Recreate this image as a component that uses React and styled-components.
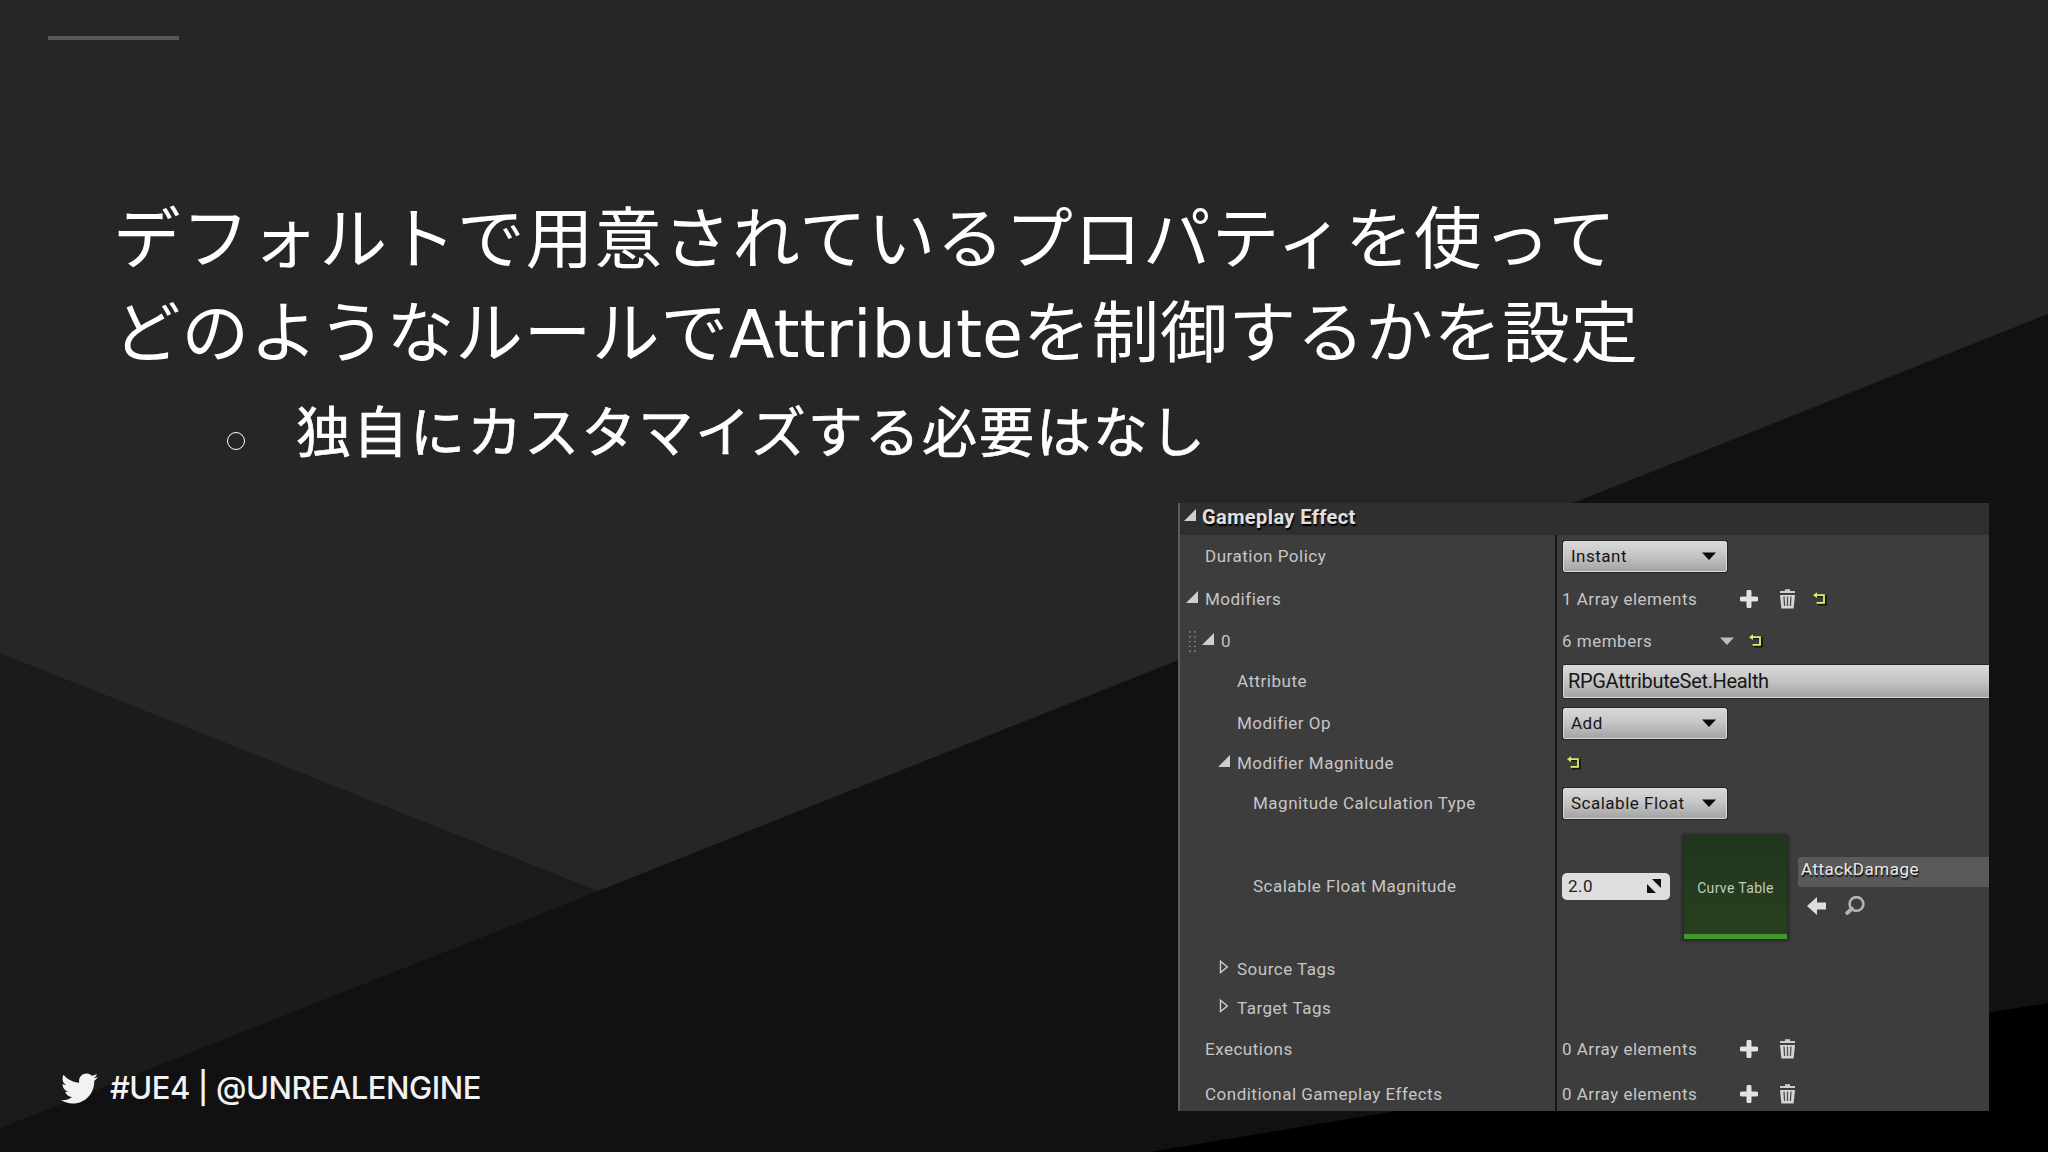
import styled, { createGlobalStyle } from "styled-components";
import { FaTwitter } from "react-icons/fa";

const GlobalStyle = createGlobalStyle`
  body {
    margin: 0;
    background: #262626;
  }
  * {
    box-sizing: border-box;
  }
`;

const Slide = styled.main`
  position: relative;
  width: 2048px;
  height: 1152px;
  overflow: hidden;
  display: flex;
  flex-direction: column;
  background: #262626;
  color: #fff;
`;

const Backdrop = styled.svg`
  position: absolute;
  inset: 0;
`;

const Accent = styled.div`
  position: relative;
  width: 131px;
  height: 4px;
  margin: 36px 0 0 48px;
  background: #585858;
`;

const TextBlock = styled.section`
  position: relative;
  margin: 147px 0 0 113px;
  white-space: nowrap;
  font-family: "Noto Sans CJK JP", sans-serif;
`;

const Heading = styled.h1`
  margin: 0;
  font-size: 67.6px;
  font-weight: 400;
  line-height: 94px;
`;

const HeadingLine = styled.span`
  display: block;
  letter-spacing: ${(props) => props.$tracking}px;
`;

const Latin = styled.span`
  font-family: "DejaVu Sans", sans-serif;
  font-size: 66.6px;
  line-height: 1;
  letter-spacing: 0;
`;

const SubList = styled.ul`
  list-style: none;
  margin: 11px 0 0;
  padding: 0 0 0 114px;
`;

const SubItem = styled.li`
  display: flex;
  align-items: center;
  gap: 51px;
  font-size: 55px;
  font-weight: 400;
  line-height: 84px;
  letter-spacing: 2.05px;
  -webkit-text-stroke: 0.7px #fff;
`;

const Bullet = styled.span`
  width: 18px;
  height: 18px;
  margin-top: 25px;
  border: 1.5px solid #fff;
  border-radius: 50%;
`;

const Lower = styled.div`
  position: relative;
  flex: 1;
  display: flex;
  justify-content: space-between;
  align-items: flex-end;
  padding: 0 59px 41px 61px;
`;

const Social = styled.footer`
  display: flex;
  align-items: center;
  gap: 12px;
  height: 46px;
  color: #f2f2f2;
  font: 500 31px/46px Inter, sans-serif;
  letter-spacing: -0.45px;
`;

const Panel = styled.section`
  width: 811px;
  height: 608px;
  overflow: hidden;
  border-left: 2px solid #5c5c5c;
  background: #3d3d3d;
  color: #c6c6c6;
  font: 400 17px/22px Roboto, sans-serif;
  letter-spacing: 0.5px;
  white-space: nowrap;
`;

const PanelHeader = styled.header`
  display: flex;
  align-items: center;
  gap: 6px;
  height: 32px;
  padding: 0 0 5px 4px;
  background: #2f2f2f;
  color: #e0e0e0;
  font-size: 20px;
  font-weight: 700;
  letter-spacing: 0.4px;
  text-shadow: 1px 2px 1px #000;
`;

const Row = styled.div`
  display: grid;
  grid-template-columns: 377px 1fr;
  height: ${(props) => props.$height}px;
`;

const NameCell = styled.div`
  display: flex;
  align-items: center;
  padding: 0 0 1px ${(props) => props.$indent}px;
  border-right: 2px solid #161616;
`;

const ValueCell = styled.div`
  display: flex;
  align-items: center;
  padding-left: 5px;
`;

const Arrow = styled.svg`
  flex: none;
  margin: 0 ${(props) => props.$gap || 0}px 4px 0;
`;

const Grip = styled.svg`
  flex: none;
  margin: 2px 5px 0 1px;
`;

const Button = styled.div`
  display: flex;
  align-items: center;
  justify-content: space-between;
  flex: none;
  width: 164px;
  height: 31px;
  margin-left: 1px;
  padding: 0 10px 1px 7px;
  border: 1px solid #d9d9d9;
  border-radius: 2px;
  box-shadow: 0 0 0 1px #262626;
  background: linear-gradient(#d8d8d8, #c6c6c6 45%, #a4a4a4);
  color: #161616;
`;

const WideButton = styled(Button)`
  width: auto;
  flex: 1;
  height: 33px;
  padding-left: 4px;
  border-right: 0;
  border-radius: 2px 0 0 2px;
  font-size: 20px;
  letter-spacing: -0.33px;
`;

const Count = styled.span`
  width: ${(props) => props.$width}px;
  padding-bottom: 1px;
`;

const Tools = styled.span`
  display: flex;
  align-items: center;
  gap: ${(props) => props.$gap}px;
  padding-bottom: 1px;
`;

const NumberField = styled.div`
  display: flex;
  align-items: center;
  justify-content: space-between;
  width: 108px;
  height: 27px;
  padding: 0 9px 0 6px;
  border-radius: 5px;
  background: #dedede;
  color: #222;
`;

const Thumb = styled.div`
  display: flex;
  align-items: center;
  justify-content: center;
  width: 103px;
  height: 103px;
  margin: 3px 11px 0 14px;
  padding-top: 5px;
  border-bottom: 5px solid #43972b;
  box-shadow: 0 0 3px 2px #262626;
  background: linear-gradient(#20361c, #28401f);
  color: #c3cbc0;
  font-size: 14px;
  letter-spacing: 0.35px;
`;

const Asset = styled.div`
  flex: 1;
  display: flex;
  flex-direction: column;
  gap: 9px;
`;

const AssetName = styled.div`
  height: 30px;
  padding: 1px 0 0 3px;
  border-radius: 3px 0 0 3px;
  background: #5a5a5a;
  color: #e8e8e8;
  text-shadow: 1px 2px 1px #111;
`;

const AssetTools = styled.div`
  display: flex;
  align-items: center;
  gap: 18px;
  padding-left: 9px;
`;

const Expanded = ({ gap }) => (
  <Arrow $gap={gap} width="12" height="12" viewBox="0 0 12 12">
    <path d="M12 0v12H0z" fill="#cfcfcf" />
  </Arrow>
);

const Collapsed = ({ gap }) => (
  <Arrow $gap={gap} width="10" height="14" viewBox="0 0 10 14">
    <path d="M1.5 1.3v11.2L8.3 7z" fill="none" stroke="#cfcfcf" strokeWidth="1.4" />
  </Arrow>
);

const Caret = ({ color = "#0a0a0a" }) => (
  <svg width="14" height="8" viewBox="0 0 14 8">
    <path d="M0 .5h14L7 8z" fill={color} />
  </svg>
);

const PlusIcon = () => (
  <svg width="18" height="18" viewBox="0 0 18 18">
    <path d="M9 2v14M2 9h14" stroke="#e2e2e2" strokeWidth="5" strokeLinecap="round" />
  </svg>
);

const TrashIcon = () => (
  <svg width="17" height="20" viewBox="0 0 17 20">
    <path d="M1 3h15M6 1.2h5" stroke="#cfcfcf" strokeWidth="2" />
    <path d="M1 6h15l-1.4 13.5H2.4z" fill="#d6d6d6" />
    <path d="M5 7.5l.6 9.5M8.5 7.5V17M12 7.5l-.6 9.5" stroke="#4c4c4c" strokeWidth="1.3" />
  </svg>
);

const ResetIcon = () => (
  <svg width="14" height="14" viewBox="0 0 14 14">
    <path d="M4 4.2h8.8v8.4H5" fill="none" stroke="#151515" strokeWidth="2" />
    <path d="M3 3.2h8v7.6H3.6" fill="none" stroke="#dfee66" strokeWidth="1.8" />
    <path d="M0 3.2L4 .3v5.8z" fill="#dfee66" />
  </svg>
);

const DragIcon = () => (
  <svg width="14" height="14" viewBox="0 0 14 14">
    <path d="M5 0h9v9zM0 5v9h9z" fill="#111" />
  </svg>
);

const UseIcon = () => (
  <svg width="20" height="18" viewBox="0 0 20 18">
    <path d="M0 9L10 0v5.5h9v7h-9V18z" fill="#dedede" />
  </svg>
);

const FindIcon = () => (
  <svg width="20" height="19" viewBox="0 0 20 19">
    <circle cx="11.5" cy="8" r="6.9" fill="none" stroke="#b4b4b4" strokeWidth="2.6" />
    <path d="M7 12.7L2.2 17" stroke="#b4b4b4" strokeWidth="3.8" strokeLinecap="round" />
  </svg>
);

const dots = [0, 1, 2, 3, 4];

const DragHandle = () => (
  <Grip width="8" height="22" viewBox="0 0 8 22">
    {dots.map((n) => (
      <path key={n} d={`M0 ${1 + n * 4.8}h1.6M5 ${1 + n * 4.8}h1.6`} stroke="#8e8e8e" strokeWidth="1.4" />
    ))}
  </Grip>
);

const Dropdown = ({ label }) => (
  <Button>
    {label}
    <Caret />
  </Button>
);

const ResetTool = styled(Tools)`
  margin-left: ${(props) => props.$offset}px;
`;

const ArrayValue = ({ count, reset }) => (
  <>
    <Count $width={178}>{count} Array elements</Count>
    <Tools $gap={21}>
      <PlusIcon />
      <TrashIcon />
    </Tools>
    {reset ? (
      <ResetTool $offset={17}>
        <ResetIcon />
      </ResetTool>
    ) : null}
  </>
);

const rows = [
  { name: "Duration Policy", height: 42, indent: 25, value: <Dropdown label="Instant" /> },
  { name: "Modifiers", height: 44, indent: 6, icon: <Expanded gap={7} />, value: <ArrayValue count={1} reset /> },
  {
    name: "0",
    height: 40,
    indent: 8,
    icon: (
      <>
        <DragHandle />
        <Expanded gap={7} />
      </>
    ),
    value: (
      <>
        <Count $width={158}>6 members</Count>
        <Tools $gap={15}>
          <Caret color="#bdbdbd" />
          <ResetIcon />
        </Tools>
      </>
    ),
  },
  { name: "Attribute", height: 40, indent: 57, value: <WideButton>RPGAttributeSet.Health</WideButton> },
  { name: "Modifier Op", height: 45, indent: 57, value: <Dropdown label="Add" /> },
  {
    name: "Modifier Magnitude",
    height: 34,
    indent: 38,
    icon: <Expanded gap={7} />,
    value: (
      <ResetTool $offset={5}>
        <ResetIcon />
      </ResetTool>
    ),
  },
  { name: "Magnitude Calculation Type", height: 47, indent: 73, value: <Dropdown label="Scalable Float" /> },
  {
    name: "Scalable Float Magnitude",
    height: 118,
    indent: 73,
    value: (
      <>
        <NumberField>
          2.0
          <DragIcon />
        </NumberField>
        <Thumb>Curve Table</Thumb>
        <Asset>
          <AssetName>AttackDamage</AssetName>
          <AssetTools>
            <UseIcon />
            <FindIcon />
          </AssetTools>
        </Asset>
      </>
    ),
  },
  { name: "Source Tags", height: 48, indent: 39, icon: <Collapsed gap={8} /> },
  { name: "Target Tags", height: 31, indent: 39, icon: <Collapsed gap={8} /> },
  { name: "Executions", height: 50, indent: 25, value: <ArrayValue count={0} /> },
  { name: "Conditional Gameplay Effects", height: 40, indent: 25, value: <ArrayValue count={0} /> },
];

const App = () => {
  return (
    <>
      <GlobalStyle />
      <Slide>
        <Backdrop width="2048" height="1152" viewBox="0 0 2048 1152">
          <path d="M0 653L598 891L0 1128z" fill="#1b1b1b" />
          <path d="M2048 314L598 891L0 1128V1152H2048z" fill="#111" />
          <path d="M2048 1003L1150 1152H2048z" fill="#000" />
        </Backdrop>
        <Accent />
        <TextBlock>
          <Heading>
            <HeadingLine $tracking={1.2}>デフォルトで用意されているプロパティを使って</HeadingLine>
            <HeadingLine $tracking={0.85}>
              どのようなルールで<Latin>Attribute</Latin>を制御するかを設定
            </HeadingLine>
          </Heading>
          <SubList>
            <SubItem>
              <Bullet />
              独自にカスタマイズする必要はなし
            </SubItem>
          </SubList>
        </TextBlock>
        <Lower>
          <Social>
            <FaTwitter size={37} />
            #UE4 | @UNREALENGINE
          </Social>
          <Panel>
            <PanelHeader>
              <Expanded />
              Gameplay Effect
            </PanelHeader>
            {rows.map((row) => (
              <Row key={row.name} $height={row.height}>
                <NameCell $indent={row.indent}>
                  {row.icon}
                  {row.name}
                </NameCell>
                <ValueCell>{row.value}</ValueCell>
              </Row>
            ))}
          </Panel>
        </Lower>
      </Slide>
    </>
  );
};

export default App;
